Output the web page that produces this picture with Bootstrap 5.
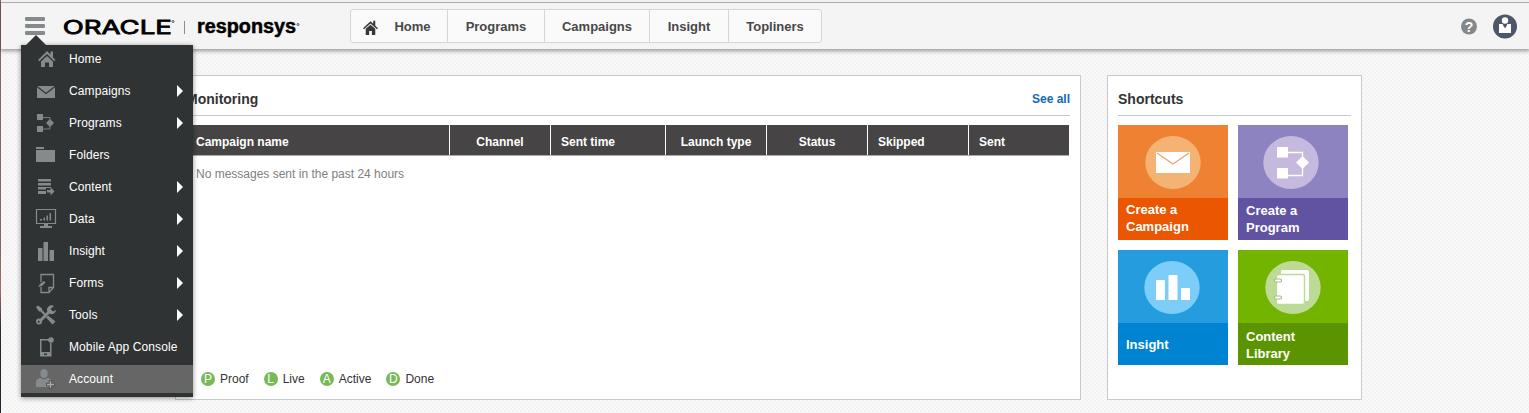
<!DOCTYPE html>
<html lang="en">
<head>
<meta charset="utf-8">
<meta name="viewport" content="width=device-width, initial-scale=1">
<title>Oracle Responsys</title>
<link rel="stylesheet" href="https://cdn.jsdelivr.net/npm/bootstrap@5.3.0/dist/css/bootstrap.min.css">
<style>
body{font-family:"Liberation Sans",Arial,sans-serif;font-size:12px;line-height:16px;color:#333;height:413px;overflow:hidden;
  background:#f7f7f7 repeating-conic-gradient(#f3f3f3 0 25%,#f9f9f9 0 50%) 0 0/4px 4px}
.page-edge{width:1px;height:413px;background:linear-gradient(#8a6762 0 250px,#a0706b 290px,#2b2830 330px,#202634)}
.topbar{height:46px;background:#f4f4f4;border-top:1px solid #f1f1f1;box-shadow:0 1px 4px 1px rgba(0,0,0,.38);padding-left:23px}
.top-rule{height:3px;background:#f0f0f0;border-bottom:1px solid #adadad;position:relative;z-index:1}
.menu-toggle{width:22px;height:46px}
.brand{width:240px;height:34px;margin:5px 0 0 14px}
.tabs{height:34px;margin:5px 0 0 50px;border:1px solid #d5d5d5;border-radius:3px;background:#fafafa;font-size:13px;font-weight:700;color:#484848}
.tabs a{color:inherit;text-decoration:none;display:flex;align-items:center;justify-content:center;padding-top:2px}
.tabs a+a{border-left:1px solid #d5d5d5}
.main-menu{left:21px;top:45px;width:172px;height:352px;background:#303334;box-shadow:0 1px 5px rgba(0,0,0,.45);z-index:5;letter-spacing:.1px}
.main-menu::before{content:"";position:absolute;left:5px;top:-10px;border:solid transparent;border-width:0 10px 10px;border-bottom-color:#303334}
.main-menu a{height:28px;margin-bottom:4px;padding:0 10px 0 14px;color:#fff;text-decoration:none}
.main-menu a.current{background:#666}
.main-menu svg{width:22px;height:22px;margin-right:12px;fill:#858a8c;flex:none}
.caret{margin-left:auto;border:solid transparent;border-width:6.5px 0 6.5px 6.5px;border-left-color:#fff}
.workspace{padding:26px 0 0 174px;gap:26px}
.panel{background:#fff;border:1px solid #c5c9d0;height:325px;padding:0 10px}
.panel-monitor{width:906px}
.panel-shortcuts{width:255px}
.panel-title{height:40px;padding-top:7px;border-bottom:1px solid #c2c9d1;font-size:14px;font-weight:700}
.panel-title a{color:#1169b8;font-size:12px;text-decoration:none}
.grid-head{margin-top:9px;width:883px;height:31px;background:#474445;border-bottom:1px solid #aaa;color:#fff;font-weight:700}
.grid-head div{width:101px;display:flex;align-items:center;border-left:1px solid #fff;padding:4px 0 0 10px}
.grid-head div:first-child{width:263px;border-left:0}
.grid-head .mid{justify-content:center;padding-left:0}
.grid-note{height:203px;padding:10px 0 0 10px;color:#808080}
.legend{gap:15px;padding:12px 0 0 15px}
.legend i{width:14px;height:14px;border-radius:50%;background:#76b956;color:#fff;font-style:normal;font-size:12px;line-height:14px;text-align:center;margin-right:5px}
.tiles{display:grid;grid-template-columns:110px 110px;gap:10px;margin-top:9px}
.tile{height:115px;color:#fff;font-size:13px;line-height:17px;font-weight:700;text-decoration:none}
.tile svg{display:block;width:110px;height:73px}
.tile span{height:42px;display:flex;align-items:center;padding:0 8px}
.tile .raised{padding-bottom:2px}
.tile .lowered{padding-top:2px}
</style>
</head>
<body class="d-flex">
<div class="page-edge flex-shrink-0"></div>
<div class="flex-grow-1">
  <div class="top-rule"></div>
  <header class="topbar d-flex align-items-start">
    <svg class="menu-toggle" viewBox="0 0 22 46" fill="#858a8c"><rect x="1" y="13" width="20" height="4" rx="1.3"/><rect x="1" y="20" width="20" height="4" rx="1.3"/><rect x="1" y="27" width="20" height="4" rx="1.3"/></svg>
    <svg class="brand" viewBox="60 9 240 34" font-family="Liberation Sans, Arial, sans-serif">
      <text x="62.800" y="33.500" font-family="Inter, sans-serif" font-weight="400" font-size="19" textLength="109" lengthAdjust="spacingAndGlyphs" stroke="#000" stroke-width=".8">ORACLE</text>
      <circle cx="173" cy="21.500" r="1" fill="none" stroke="#333" stroke-width=".8"/>
      <path d="M184.500 21v13" stroke="#8b8b8b"/>
      <text x="197" y="33" font-weight="700" font-size="20" textLength="99" lengthAdjust="spacingAndGlyphs" stroke="#000" stroke-width=".5">responsys</text>
      <circle cx="298" cy="24.500" r="1" fill="none" stroke="#333" stroke-width=".8"/>
    </svg>
    <nav class="tabs d-flex">
      <a href="#" style="width:96px;padding-right:4px"><svg class="me-3" width="15" height="15" viewBox="0 0 22 22" fill="#383838"><path d="M11 2 0 12l1.500 1.500L11 5l9.500 8.500L22 12l-4-3.700V1h-3v4.500zM4 13v9h5v-6h4v6h5v-9l-7-6z"/></svg>Home</a>
      <a href="#" style="width:97px">Programs</a><a href="#" style="width:105px">Campaigns</a><a href="#" style="width:79px">Insight</a><a href="#" style="width:93px">Topliners</a>
    </nav>
    <svg class="ms-auto" width="80" height="46" viewBox="1449 4 80 46"><circle cx="1469" cy="26.500" r="8" fill="#858889"/><text x="1469" y="31.500" text-anchor="middle" font-family="Liberation Sans, sans-serif" font-weight="700" font-size="14" fill="#fff">?</text>
      <circle cx="1505" cy="26.500" r="12" fill="#4d566b"/><path d="M1499 24h3.500l2.500 4 2.500-4h3.500v9h-12z" fill="#fff"/><circle cx="1505" cy="20.500" r="3.200" fill="#fff"/><path d="m1503.500 24 1.500 1 1.500-1v2l-1.500 2-1.500-2z" fill="#4d566b"/></svg>
  </header>

  <main class="workspace d-flex">
    <section class="panel panel-monitor">
      <div class="panel-title d-flex align-items-center justify-content-between"><span>Monitoring</span><a href="#">See all</a></div>
      <div class="grid-head d-flex"><div>Campaign name</div><div class="mid">Channel</div><div style="width:115px">Sent time</div><div class="mid">Launch type</div><div class="mid">Status</div><div>Skipped</div><div>Sent</div></div>
      <div class="grid-note">No messages sent in the past 24 hours</div>
      <div class="legend d-flex"><span class="d-flex align-items-center"><i>P</i>Proof</span><span class="d-flex align-items-center"><i>L</i>Live</span><span class="d-flex align-items-center"><i>A</i>Active</span><span class="d-flex align-items-center"><i>D</i>Done</span></div>
    </section>
    <section class="panel panel-shortcuts">
      <div class="panel-title d-flex align-items-center">Shortcuts</div>
      <div class="tiles">
        <a href="#" class="tile" style="background:#eb5600"><svg viewBox="0 0 110 73"><path fill="#ef8132" d="M0 0h110v73H0z"/><ellipse cx="55" cy="37.500" rx="27.700" ry="26.500" fill="#f5b373"/><path fill="#fff" d="M38 27h34v21H38z"/><path d="m39 28 16 11 16-11" fill="none" stroke="#efa36d" stroke-width="1.300"/></svg><span class="raised">Create a Campaign</span></a>
        <a href="#" class="tile" style="background:#6153a1"><svg viewBox="0 0 110 73"><path fill="#8d83c1" d="M0 0h110v73H0z"/><ellipse cx="53" cy="37.500" rx="27.700" ry="26.500" fill="#c5b9dd"/><path fill="#fff" d="M39 22h11v10.500H39zM39 43h11v10.500H39zM64.500 31l6.500 6.500-6.500 6.500-6.500-6.500z"/><path d="M50 27.500h14.500v23H50" fill="none" stroke="#fff" stroke-width="1.300"/></svg><span>Create a Program</span></a>
        <a href="#" class="tile" style="background:#0084d2"><svg viewBox="0 0 110 73"><path fill="#249cdd" d="M0 0h110v73H0z"/><ellipse cx="54" cy="37.500" rx="27.700" ry="26.500" fill="#7ccdf8"/><path fill="#fff" d="M38 30h9v20h-9zM50.500 25h9v25h-9zM63 38h9v12h-9z"/></svg><span>Insight</span></a>
        <a href="#" class="tile" style="background:#5b9400"><svg viewBox="0 0 110 73"><path fill="#73b400" d="M0 0h110v73H0z"/><ellipse cx="55" cy="37.500" rx="27.700" ry="26.500" fill="#bddb94"/><rect x="43" y="20" width="28" height="31" rx="2" fill="#fff"/><rect x="38.500" y="24.500" width="28" height="30" rx="2" fill="#fff" stroke="#bddb94" stroke-width="1.400"/><g stroke="#a3bb80" stroke-width="4.200" stroke-linecap="round"><path d="M38 30.500h4M38 47.500h4"/></g><g stroke="#fff" stroke-width="2" stroke-linecap="round"><path d="M38 30.500h4M38 47.500h4"/></g></svg><span class="lowered">Content Library</span></a>
      </div>
    </section>
  </main>
</div>

<nav class="main-menu position-absolute">
  <a href="#" class="d-flex align-items-center"><svg viewBox="0 0 22 22"><path d="M12 3 3 12l1.300 1.300L12 6l7.300 7.300L20.500 12 18 9.500V3.500h-2.500V6.500zM6 13.500V19h4v-4.500h4V19h4v-5.500L12 8z"/></svg>Home</a>
  <a href="#" class="d-flex align-items-center"><svg viewBox="0 0 22 22"><path d="M2 6h18v12H2z"/><path d="m2 6.500 9 7 9-7" fill="none" stroke="#303334" stroke-width="1.200"/></svg>Campaigns<b class="caret"></b></a>
  <a href="#" class="d-flex align-items-center"><svg viewBox="0 0 22 22"><path d="M2 2h6v6H2zM2 14h6v6H2zM15 7l4 4-4 4-4-4z"/><path d="M8 5.500h7v11.500H8" fill="none" stroke="#777c7e"/></svg>Programs<b class="caret"></b></a>
  <a href="#" class="d-flex align-items-center"><svg viewBox="0 0 22 22"><path d="M1 3h8v2H1zM1 6h19v12H1z"/></svg>Folders</a>
  <a href="#" class="d-flex align-items-center"><svg viewBox="0 0 22 22"><path d="M3 3h13v2.500H3zM3 7h13v2.500H3zM3 11h13v1H3zM3 12h8v1.500H3zM3 15h8v3H3zM12 14h3.500v-3l4 4.500-4 4v-3H12z"/></svg>Content<b class="caret"></b></a>
  <a href="#" class="d-flex align-items-center"><svg viewBox="0 0 22 22"><path d="M1.500 1.500h19v14h-19z" fill="none" stroke="#858a8c" stroke-width="1.200"/><path d="M5 11h2v1.500H5zM8.500 9.500h1.500v3H8.500zM11.500 7.500H13v5h-1.500zM14.500 5H16v7.500h-1.500zM9 16h4v2h4v2H5v-2h4z"/></svg>Data<b class="caret"></b></a>
  <a href="#" class="d-flex align-items-center"><svg viewBox="0 0 22 22"><path d="M3 8h4.500v13H3zM8.500 2H13v19H8.500zM14.500 10H19v11h-4.500z"/></svg>Insight<b class="caret"></b></a>
  <a href="#" class="d-flex align-items-center"><svg viewBox="0 0 22 22"><path d="M6 10V2.500h12.500v13L14 20.500H6V15M14 20.500v-5h4.500" fill="none" stroke="#858a8c" stroke-width="1.300"/><path d="m3 15 2-3 4-3 1.500 1.500L7 14z"/></svg>Forms<b class="caret"></b></a>
  <a href="#" class="d-flex align-items-center"><svg viewBox="0 0 22 22"><path d="m1 3 2-1.500 4 3V6l4 4-1.500 1.500-4-4H4zM13 11.500l7.500 6-3 3-6.500-7z"/><path d="m3.500 18.500 11-11" stroke="#858a8c" stroke-width="3"/><path d="M19 2a4.500 4.500 0 1 0 2 4l-3 1.500L15.500 5z"/><circle cx="4" cy="17.500" r="3"/><circle cx="3.700" cy="17.800" r="1" fill="#303334"/></svg>Tools<b class="caret"></b></a>
  <a href="#" class="d-flex align-items-center"><svg viewBox="0 0 22 22"><path d="M5 3h9v1.500H6.500V16H15V7h1.500v13.500H5zM9 17.500v1.500h3v-1.500z" fill-rule="evenodd"/><circle cx="16" cy="4" r="2.800"/></svg><span class="text-nowrap">Mobile App Console</span></a>
  <a href="#" class="d-flex align-items-center current"><svg viewBox="0 0 22 22"><ellipse cx="9" cy="5.500" rx="3.600" ry="4.500"/><path d="M1 19v-5q0-3 4-4l4 1.500 4-1.500q4 1 4 4v5z"/><path d="M15.500 12v9M11 16.500h9" stroke="#555" stroke-width="3.500"/><path d="M15.500 13v7M12 16.500h7" stroke="#aaa" stroke-width="1.300"/></svg>Account</a>
</nav>
<script src="https://cdn.jsdelivr.net/npm/bootstrap@5.3.0/dist/js/bootstrap.bundle.min.js"></script>
</body>
</html>
